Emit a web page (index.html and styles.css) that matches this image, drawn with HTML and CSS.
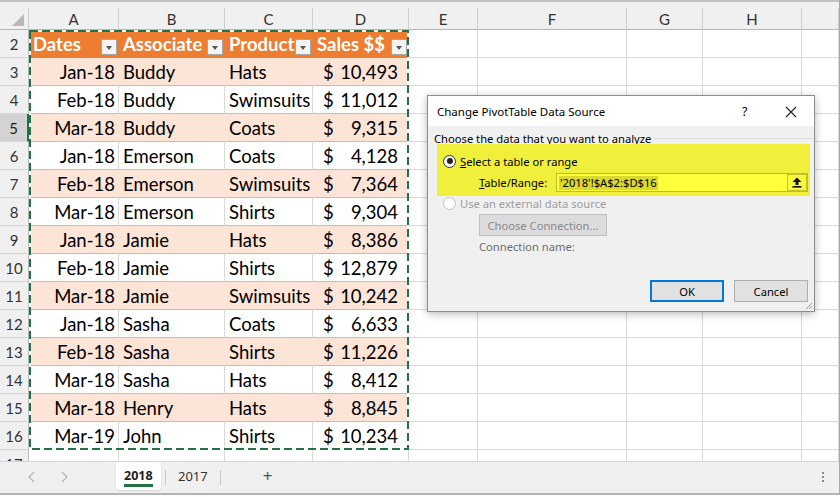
FILE: index.html
```html
<!DOCTYPE html>
<html>
<head>
<meta charset="utf-8">
<link rel="stylesheet" href="styles.css">
</head>
<body>
<div class="window">
  <div class="sheet">
    <div class="topstrip"></div>
    <div class="r colhead">
      <div class="ch corner"><svg width="16" height="14" viewBox="0 0 16 14"><polygon points="14,1 14,13 2,13" fill="#b8b8b8"/></svg></div>
      <div class="ch">A</div><div class="ch">B</div><div class="ch">C</div><div class="ch">D</div><div class="ch">E</div><div class="ch">F</div><div class="ch">G</div><div class="ch">H</div><div class="ch"></div>
    </div>

    <div class="r">
      <div class="rh">2</div>
      <div class="c th"><span>Dates</span><i class="fb"></i></div>
      <div class="c th"><span>Associate</span><i class="fb"></i></div>
      <div class="c th"><span>Product</span><i class="fb"></i></div>
      <div class="c th"><span>Sales $$</span><i class="fb"></i></div>
      <div class="c"></div><div class="c"></div><div class="c"></div><div class="c"></div><div class="c"></div>
    </div>

    <div class="r band">
      <div class="rh">3</div>
      <div class="c t dt">Jan-18</div><div class="c t">Buddy</div><div class="c t">Hats</div><div class="c t amt"><span>$</span><span>10,493</span></div>
      <div class="c"></div><div class="c"></div><div class="c"></div><div class="c"></div><div class="c"></div>
    </div>
    <div class="r plain">
      <div class="rh">4</div>
      <div class="c t dt">Feb-18</div><div class="c t">Buddy</div><div class="c t">Swimsuits</div><div class="c t amt"><span>$</span><span>11,012</span></div>
      <div class="c"></div><div class="c"></div><div class="c"></div><div class="c"></div><div class="c"></div>
    </div>
    <div class="r band">
      <div class="rh active">5</div>
      <div class="c t dt">Mar-18</div><div class="c t">Buddy</div><div class="c t">Coats</div><div class="c t amt"><span>$</span><span>9,315</span></div>
      <div class="c"></div><div class="c"></div><div class="c"></div><div class="c"></div><div class="c"></div>
    </div>
    <div class="r plain">
      <div class="rh">6</div>
      <div class="c t dt">Jan-18</div><div class="c t">Emerson</div><div class="c t">Coats</div><div class="c t amt"><span>$</span><span>4,128</span></div>
      <div class="c"></div><div class="c"></div><div class="c"></div><div class="c"></div><div class="c"></div>
    </div>
    <div class="r band">
      <div class="rh">7</div>
      <div class="c t dt">Feb-18</div><div class="c t">Emerson</div><div class="c t">Swimsuits</div><div class="c t amt"><span>$</span><span>7,364</span></div>
      <div class="c"></div><div class="c"></div><div class="c"></div><div class="c"></div><div class="c"></div>
    </div>
    <div class="r plain">
      <div class="rh">8</div>
      <div class="c t dt">Mar-18</div><div class="c t">Emerson</div><div class="c t">Shirts</div><div class="c t amt"><span>$</span><span>9,304</span></div>
      <div class="c"></div><div class="c"></div><div class="c"></div><div class="c"></div><div class="c"></div>
    </div>
    <div class="r band">
      <div class="rh">9</div>
      <div class="c t dt">Jan-18</div><div class="c t">Jamie</div><div class="c t">Hats</div><div class="c t amt"><span>$</span><span>8,386</span></div>
      <div class="c"></div><div class="c"></div><div class="c"></div><div class="c"></div><div class="c"></div>
    </div>
    <div class="r plain">
      <div class="rh">10</div>
      <div class="c t dt">Feb-18</div><div class="c t">Jamie</div><div class="c t">Shirts</div><div class="c t amt"><span>$</span><span>12,879</span></div>
      <div class="c"></div><div class="c"></div><div class="c"></div><div class="c"></div><div class="c"></div>
    </div>
    <div class="r band">
      <div class="rh">11</div>
      <div class="c t dt">Mar-18</div><div class="c t">Jamie</div><div class="c t">Swimsuits</div><div class="c t amt"><span>$</span><span>10,242</span></div>
      <div class="c"></div><div class="c"></div><div class="c"></div><div class="c"></div><div class="c"></div>
    </div>
    <div class="r plain">
      <div class="rh">12</div>
      <div class="c t dt">Jan-18</div><div class="c t">Sasha</div><div class="c t">Coats</div><div class="c t amt"><span>$</span><span>6,633</span></div>
      <div class="c"></div><div class="c"></div><div class="c"></div><div class="c"></div><div class="c"></div>
    </div>
    <div class="r band">
      <div class="rh">13</div>
      <div class="c t dt">Feb-18</div><div class="c t">Sasha</div><div class="c t">Shirts</div><div class="c t amt"><span>$</span><span>11,226</span></div>
      <div class="c"></div><div class="c"></div><div class="c"></div><div class="c"></div><div class="c"></div>
    </div>
    <div class="r plain">
      <div class="rh">14</div>
      <div class="c t dt">Mar-18</div><div class="c t">Sasha</div><div class="c t">Hats</div><div class="c t amt"><span>$</span><span>8,412</span></div>
      <div class="c"></div><div class="c"></div><div class="c"></div><div class="c"></div><div class="c"></div>
    </div>
    <div class="r band">
      <div class="rh">15</div>
      <div class="c t dt">Mar-18</div><div class="c t">Henry</div><div class="c t">Hats</div><div class="c t amt"><span>$</span><span>8,845</span></div>
      <div class="c"></div><div class="c"></div><div class="c"></div><div class="c"></div><div class="c"></div>
    </div>
    <div class="r plain">
      <div class="rh">16</div>
      <div class="c t dt">Mar-19</div><div class="c t">John</div><div class="c t">Shirts</div><div class="c t amt"><span>$</span><span>10,234</span></div>
      <div class="c"></div><div class="c"></div><div class="c"></div><div class="c"></div><div class="c"></div>
    </div>
    <div class="r">
      <div class="rh">17</div>
      <div class="c"></div><div class="c"></div><div class="c"></div><div class="c"></div><div class="c"></div><div class="c"></div><div class="c"></div><div class="c"></div><div class="c"></div>
    </div>

    <svg class="ants" width="380" height="420" viewBox="0 0 380 420">
      <rect x="1" y="1" width="378" height="418" fill="none" stroke="#ffffff" stroke-width="2"/>
      <rect x="1" y="1" width="378" height="418" fill="none" stroke="#217346" stroke-width="2" stroke-dasharray="8 4"/>
    </svg>
  </div>

  <div class="tabbar">
    <div class="nav">
      <svg width="8" height="12" viewBox="0 0 8 12"><polyline points="6,1 1,6 6,11" fill="none" stroke="#b4b4b4" stroke-width="1.2"/></svg>
      <svg width="8" height="12" viewBox="0 0 8 12"><polyline points="2,1 7,6 2,11" fill="none" stroke="#b4b4b4" stroke-width="1.2"/></svg>
    </div>
    <div class="tab active"><span>2018</span></div>
    <i class="sep"></i>
    <div class="tab"><span>2017</span></div>
    <i class="sep"></i>
    <div class="add">+</div>
    <div class="more"><i></i><i></i><i></i></div>
  </div>

  <div class="dialog">
    <div class="dtitle">
      <span class="dtext">Change PivotTable Data Source</span>
      <span class="dq">?</span>
      <svg class="dx" width="12" height="12" viewBox="0 0 12 12"><path d="M1 1 L11 11 M11 1 L1 11" stroke="#222" stroke-width="1.1"/></svg>
    </div>
    <div class="dbody">
      <div class="grp"><span>Choose the data that you want to analyze</span><i class="grpline"></i></div>
      <div class="hl">
        <div class="rrow"><span class="radio on"></span><span><u>S</u>elect a table or range</span></div>
        <div class="range">
          <span class="lbl"><u>T</u>able/Range:</span>
          <div class="inp"><span class="sel">'2018'!$A$2:$D$16</span>
            <span class="ib"><svg width="10" height="11" viewBox="0 0 10 11"><path d="M5 0.5 L9.5 5 L6.5 5 L6.5 8 L3.5 8 L3.5 5 L0.5 5 Z" fill="#111"/><rect x="0.5" y="9" width="9" height="1.6" fill="#111"/></svg></span>
          </div>
        </div>
      </div>
      <div class="rrow dis"><span class="radio"></span><span>Use an external data source</span></div>
      <div class="btn cbtn">Choose Connection...</div>
      <div class="cname">Connection name:</div>
      <div class="footer">
        <div class="btn ok">OK</div>
        <div class="btn">Cancel</div>
      </div>
    </div>
    <svg class="grip" width="8" height="8" viewBox="0 0 8 8"><path d="M7 1 L1 7 M7 4 L4 7 M7 6.5 L6.5 7" stroke="#a0a0a0" stroke-width="1"/></svg>
  </div>
</div>
</body>
</html>
```
FILE: styles.css
```css
* { box-sizing: border-box; margin: 0; padding: 0; }
body {
  width: 840px; height: 497px; overflow: hidden; background: #ffffff;
  font-family: Lato, "Liberation Sans", sans-serif; color: #000;
}
.window {
  position: relative; width: 840px; height: 495px;
  border-right: 1px solid #a8a8a8; border-bottom: 2px solid #b4b4b4;
  display: flex; flex-direction: column;
}
.sheet {
  position: relative; height: 461px; overflow: hidden;
  display: flex; flex-direction: column; flex: none;
}
.topstrip { height: 8px; flex: none; background: #f0f0f0; border-top: 2px solid #c2c2c2; }
.r {
  display: grid; flex: none; height: 28px;
  grid-template-columns: 29px 90px 106px 88px 96px 69px 149px 76px 99px 1fr;
}
.colhead { height: 22px; }
.ch {
  background: #f0f0f0; border-right: 1px solid #cfcfcf; border-bottom: 1px solid #b6b6b6;
  display: flex; align-items: center; justify-content: center;
  font-size: 15px; color: #333;
}
.corner { align-items: flex-end; justify-content: flex-end; padding: 0 2px 2px 0; }
.corner svg { display: block; }
.rh {
  background: #f0f0f0; border-right: 1px solid #bcbcbc; border-bottom: 1px solid #d6d6d6;
  display: flex; align-items: center; justify-content: center;
  font-size: 15px; color: #333;
}
.rh.active { background: #d3d3d3; border-right: 2px solid #217346; color: #1e1e1e; }
.c {
  border-right: 1px solid #dadada; border-bottom: 1px solid #dadada;
  display: flex; align-items: center; white-space: nowrap; overflow: hidden;
  font-size: 18.5px;
}
.t { padding-left: 4px; }
.dt { justify-content: flex-end; padding: 0 3px 0 0; }
.amt { justify-content: space-between; padding: 0 10px 0 10px; }
.th {
  background: #ed7d31; border-right-color: #ed7d31; border-bottom-color: #ed7d31;
  color: #fff; font-weight: 700; padding-left: 4px; justify-content: space-between;
}
.fb {
  align-self: flex-end; margin: 0 1px 2px 0; flex: none;
  width: 16px; height: 16px; background: #f4f4f4; border: 1px solid #a5a5a5;
  position: relative;
}
.fb::after {
  content: ""; position: absolute; left: 4px; top: 6px;
  border-left: 3.5px solid transparent; border-right: 3.5px solid transparent; border-top: 4px solid #555;
}
.band .c.t { background: #fce4d6; border-right-color: #fce4d6; border-bottom-color: #f4b084; }
.plain .c.t { border-bottom-color: #f4b084; }
.ants { position: absolute; left: 29px; top: 30px; }

.tabbar {
  height: 32px; flex: none; background: #f0f0f0; border-top: 1px solid #d4d4d4;
  display: flex; align-items: flex-start; font-family: "Noto Sans", sans-serif;
}
.nav { width: 116px; height: 30px; display: flex; align-items: center; gap: 24px; padding-left: 28px; }
.nav svg { display: block; }
.tab {
  height: 28px; display: flex; align-items: center; padding: 0 8px; font-size: 13px; color: #333;
}
.tab.active {
  width: 45px; background: #fff; border-radius: 0 0 4px 4px;
  box-shadow: 0 1px 2px rgba(0,0,0,0.12); font-weight: 700; font-size: 12.5px; color: #222;
  position: relative;
}
.tab.active span { border-bottom: 3px solid #217346; line-height: 16px; padding-top: 3px; }
.tab:not(.active) { padding: 0 12px; }
.sep { width: 1px; height: 15px; margin-top: 8px; background: #c6c6c6; margin-left: 4px; }
.tab:not(.active) + .sep { margin-left: 0; }
.add { margin-left: 42px; font-size: 17px; color: #555; height: 28px; line-height: 28px; }
.more { margin-left: auto; margin-right: 15px; margin-top: 10px; display: flex; flex-direction: column; gap: 2px; }
.more i { display: block; width: 2px; height: 2px; background: #8a8a8a; }

.dialog {
  position: absolute; left: 427px; top: 95px; width: 388px; height: 217px;
  background: #f0f0f0; border: 1px solid #8c8c8c;
  box-shadow: 0 2px 8px rgba(0,0,0,0.28);
  font-family: "Noto Sans", sans-serif; font-size: 11.2px; color: #000;
}
.dtitle { height: 30px; background: #fff; display: flex; align-items: center; padding-left: 9px; position: relative; }
.dtext { font-size: 11.5px; }
.dq { position: absolute; left: 314px; top: 7px; font-size: 12.5px; }
.dx { position: absolute; left: 357px; top: 10px; }
.dbody { display: flex; flex-direction: column; }
.grp { height: 18px; padding-top: 7px; line-height: 12px; padding-left: 6px; display: flex; align-items: center; }
.grp span { white-space: nowrap; }
.grpline { flex: 1; height: 1px; background: #dcdcdc; margin: 0 2px 0 4px; }
.hl { margin-left: 9px; width: 373px; height: 52px; background: #f0f03c; display: flex; flex-direction: column; }
.rrow { display: flex; align-items: center; gap: 4px; padding-left: 6px; height: 20px; margin-top: 7px; }
.radio {
  width: 13px; height: 13px; border-radius: 50%; border: 1px solid #333; background: #fff; position: relative; flex: none;
}
.radio.on::after { content: ""; position: absolute; left: 2.5px; top: 2.5px; width: 6px; height: 6px; border-radius: 50%; background: #222; }
.rrow u, .range u { text-decoration: underline; }
.range { display: flex; align-items: center; margin-top: 2px; padding-left: 42px; height: 19px; }
.lbl { width: 77px; }
.inp {
  width: 252px; height: 19px; background: #ffff3c; border: 1px solid #bcbc2c;
  display: flex; align-items: center; justify-content: space-between; padding-left: 2px;
}
.sel { background: #d9d92e; padding: 0 1px; line-height: 14px; }
.ib {
  width: 20px; height: 17px; border: 1px solid #c4c430; background: #f8f83c;
  display: flex; align-items: center; justify-content: center;
}
.ib svg { display: block; }
.rrow.dis { height: 14px; margin-top: 0; padding-left: 15px; color: #9d9d9d; }
.rrow.dis .radio { border-color: #c2c2c2; }
.btn {
  height: 22px; width: 74px; background: #e1e1e1; border: 1px solid #adadad;
  display: flex; align-items: center; justify-content: center;
}
.cbtn { margin: 4px 0 0 51px; width: 128px; background: #dcdcdc; border-color: #bfbfbf; color: #8a8a8a; }
.cname { margin: 4px 0 0 51px; line-height: 14px; color: #6d6d6d; }
.footer { display: flex; justify-content: flex-end; gap: 10px; padding-right: 6px; margin-top: 26px; }
.btn.ok { border: 2px solid #0078d7; }
.grip { position: absolute; right: 1px; bottom: 1px; }
```
